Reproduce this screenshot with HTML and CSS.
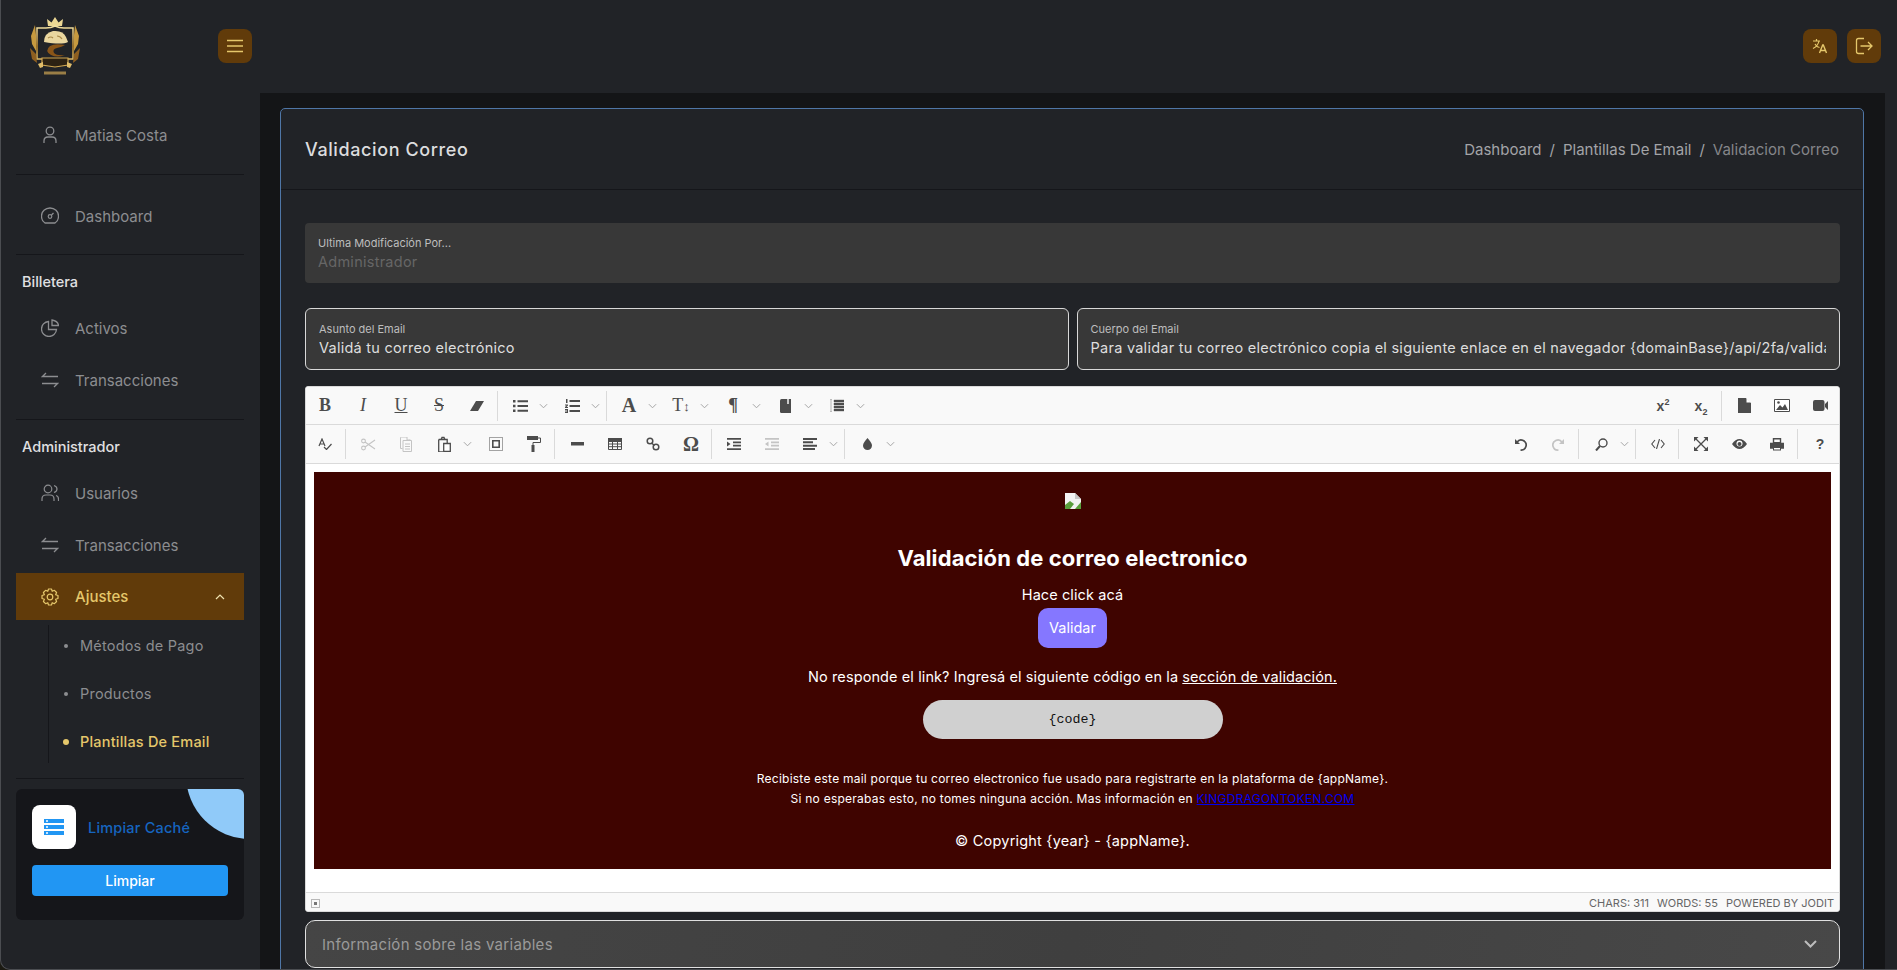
FILE: index.html
```html
<!DOCTYPE html>
<html lang="es">
<head>
  <meta charset="UTF-8">
  <meta name="viewport" content="width=device-width, initial-scale=1.0">
  <title>Validacion Correo</title>
  <link rel="stylesheet" href="styles.css">
</head>
<body>
  <svg class="defs" width="0" height="0">
    <symbol id="chev" viewBox="0 0 10 6"><path d="M1 1l4 4 4-4" fill="none" stroke="#a5a5a5" stroke-width="1.1"/></symbol>
    <symbol id="swap" viewBox="0 0 18 18"><path d="M5 2L1.5 5.5H17M13 16l3.500-3.500H1" fill="none" stroke="currentColor" stroke-width="1.300"/></symbol>
  </svg>

  <div class="app">
    <!-- barra lateral -->
    <aside class="sidebar">
      <div class="brand">
        <svg class="logo" width="50" height="60" viewBox="0 0 50 60">
          <defs>
            <linearGradient id="gold" x1="0" y1="0" x2="0" y2="1">
              <stop offset="0" stop-color="#f3e2a4"/>
              <stop offset="0.55" stop-color="#b9862c"/>
              <stop offset="1" stop-color="#e8c878"/>
            </linearGradient>
          </defs>
          <path d="M18 9l-1-7 4.500 3.500L25 0l3.500 5.500L33 2l-1 7z" fill="#ecd894"/>
          <path d="M7 11h9q5 0 9-2 4 2 9 2h9v31H31l-6 4-6-4H7z" fill="none" stroke="url(#gold)" stroke-width="1.500"/>
          <path d="M5 8l1 10v16l-4-7-1-8zM45 8l-1 10v16l4-7 1-8z" fill="#c79a3f"/>
          <path d="M0 31l6 6 1 9-5-4zM1 38l5 3M50 31l-6 6-1 9 5-4z" fill="#8f5f20"/>
          <path d="M14 25q0-9 9-11 10-1 13 6l2 5q-6 3-24 0z" fill="#e9d69f"/>
          <path d="M18 21q3-2 5 0M27 19q3 0 5 3" fill="none" stroke="#a98a4a" stroke-width="1.200"/>
          <path d="M35 28q-10-2-15 1-6 5 1 9 6 3 14 0-8 1-11-2-2-4 3-5 5-1 8-3z" fill="#8a5518"/>
          <path d="M12 41h26v7l-13 2-13-2z" fill="#2b2113" stroke="#cfa650" stroke-width="1.200"/>
          <path d="M8 47l5-2v5l-3 1zM42 47l-5-2v5l3 1z" fill="#e0bd6a"/>
          <path d="M14 54.500h22v3H14z" fill="#9a7e46"/>
        </svg>
        <button class="icon-btn">
          <svg width="16" height="14" viewBox="0 0 16 14"><path d="M0 1.500h16M0 7h16M0 12.500h16" stroke="currentColor" stroke-width="1.300"/></svg>
        </button>
      </div>

      <div class="nav-group first">
        <a class="nav-item">
          <svg class="nav-icon" viewBox="0 0 18 18"><circle cx="9" cy="5" r="3.800" fill="none" stroke="currentColor" stroke-width="1.300"/><path d="M3 17v-2q0-4 4-4h4q4 0 4 4v2" fill="none" stroke="currentColor" stroke-width="1.300"/></svg>
          Matias Costa
        </a>
      </div>
      <div class="nav-group second">
        <a class="nav-item">
          <svg class="nav-icon" viewBox="0 0 18 18"><path d="M4 16q-3.500-2-3.500-7a8.500 8 0 0 1 17 0q0 5-3.500 7z" fill="none" stroke="currentColor" stroke-width="1.300"/><circle cx="9" cy="9.500" r="1.800" fill="none" stroke="currentColor" stroke-width="1.200"/><path d="M10.500 8l2-2" stroke="currentColor" stroke-width="1.200"/></svg>
          Dashboard
        </a>
      </div>
      <div class="nav-group">
        <h4 class="nav-title">Billetera</h4>
        <a class="nav-item">
          <svg class="nav-icon" viewBox="0 0 18 18"><path d="M7.500 2.500a7.500 7.500 0 1 0 8 8H7.500z" fill="none" stroke="currentColor" stroke-width="1.300"/><path d="M11 1v5.500h6.500Q17 2 11 1z" fill="none" stroke="currentColor" stroke-width="1.300"/></svg>
          Activos
        </a>
        <a class="nav-item">
          <svg class="nav-icon"><use href="#swap"/></svg>
          Transacciones
        </a>
      </div>
      <div class="nav-group">
        <h4 class="nav-title">Administrador</h4>
        <a class="nav-item">
          <svg class="nav-icon" viewBox="0 0 18 18"><circle cx="7" cy="5" r="3.800" fill="none" stroke="currentColor" stroke-width="1.200"/><path d="M1 17v-2q0-4 4-4h4q4 0 4 4v2M13 1.500q3 1 3 3.500t-3 3.500M15 11.500q2.500.5 2.500 3.500v2" fill="none" stroke="currentColor" stroke-width="1.200"/></svg>
          Usuarios
        </a>
        <a class="nav-item">
          <svg class="nav-icon"><use href="#swap"/></svg>
          Transacciones
        </a>
        <a class="nav-item active">
          <svg class="nav-icon" viewBox="0 0 18 18"><path d="M7.500 1h3l.7 2.300 2.200-1 2.200 2.200-1 2.200L17 7.500v3l-2.400.8 1 2.200-2.200 2.200-2.200-1-.7 2.300h-3l-.7-2.300-2.200 1-2.200-2.200 1-2.200L1 10.500v-3l2.400-.8-1-2.200 2.200-2.200 2.200 1z" fill="none" stroke="currentColor" stroke-width="1.200" stroke-linejoin="round"/><circle cx="9" cy="9" r="2.800" fill="none" stroke="currentColor" stroke-width="1.200"/></svg>
          Ajustes
          <svg class="nav-caret" width="10" height="6" viewBox="0 0 10 6"><path d="M1 5l4-4 4 4" fill="none" stroke="#f0e3b0" stroke-width="1.200"/></svg>
        </a>
        <ul class="sub-nav">
          <li>Métodos de Pago</li>
          <li>Productos</li>
          <li class="current">Plantillas De Email</li>
        </ul>
      </div>

      <div class="cache-card">
        <div class="cache-head">
          <div class="cache-icon">
            <svg width="20" height="16" viewBox="0 0 20 16"><path d="M0 0h20v4H0zM0 6h20v4H0zM0 12h20v4H0z" fill="#2196f3"/><path d="M2 1.200h2v1.600H2zM2 7.200h2v1.600H2zM2 13.200h2v1.600H2z" fill="#fff"/></svg>
          </div>
          <span class="cache-title">Limpiar Caché</span>
        </div>
        <button class="cache-btn">Limpiar</button>
      </div>
    </aside>

    <div class="main">
      <header class="topbar">
        <button class="icon-btn">
          <svg width="16" height="16" viewBox="0 0 16 16"><path d="M1 3h7M4.500 1v2M7 3q-1 5-6 7.500M3 6q1.500 3 4.500 3.500" fill="none" stroke="currentColor" stroke-width="1.200"/><path d="M7.500 15l3.200-8h.6l3.200 8M8.700 12.500h4.600" fill="none" stroke="currentColor" stroke-width="1.400"/></svg>
        </button>
        <button class="icon-btn">
          <svg width="18" height="18" viewBox="0 0 18 18"><path d="M9 1.500H3.500q-2 0-2 2v11q0 2 2 2H9M5.500 9H17M13 5l4 4-4 4" fill="none" stroke="currentColor" stroke-width="1.300"/></svg>
        </button>
      </header>

      <div class="content">
        <section class="card">
          <div class="card-head">
            <h2 class="card-title">Validacion Correo</h2>
            <div class="crumbs">
              <span>Dashboard</span><i>/</i><span>Plantillas De Email</span><i>/</i><span class="last">Validacion Correo</span>
            </div>
          </div>

          <div class="card-body">
            <div class="field disabled">
              <label>Ultima Modificación Por...</label>
              <div class="value">Administrador</div>
            </div>

            <div class="field-row">
              <div class="field outlined">
                <label>Asunto del Email</label>
                <div class="value">Validá tu correo electrónico</div>
              </div>
              <div class="field outlined">
                <label>Cuerpo del Email</label>
                <div class="value">Para validar tu correo electrónico copia el siguiente enlace en el navegador {domainBase}/api/2fa/validate?token={token}</div>
              </div>
            </div>

            <div class="editor">
              <div class="tb-row">
                <span class="tb txt serif bold">B</span>
                <span class="tb txt serif italic">I</span>
                <span class="tb txt serif under">U</span>
                <span class="tb txt serif strike">S</span>
                <span class="tb"><svg width="16" height="12" viewBox="0 0 16 12"><path d="M5 11l-4 0 6-10h8l-6 10z" fill="#4c4c4c"/></svg></span>
                <i class="sep"></i>
                <span class="tb"><svg width="15" height="12" viewBox="0 0 15 12"><path d="M0 0h2.500v2.500H0zM0 4.700h2.500v2.500H0zM0 9.500h2.500V12H0zM4.500.3H15v2H4.500zM4.500 5H15v2H4.500zM4.500 9.800H15v2H4.500z" fill="#4c4c4c"/></svg></span><span class="arrow"><svg width="9" height="6"><use href="#chev"/></svg></span>
                <span class="tb"><svg width="15" height="14" viewBox="0 0 15 14"><path d="M1 0h1.500v4H1zM0 5.500h3v1L1.500 8H3v1H0V8l1.500-1.500H0zM0 10h3v4H0v-1h2v-.5H0v-1h2V11H0zM4.500 1H15v2H4.500zM4.500 6H15v2H4.500zM4.500 11H15v2H4.500z" fill="#4c4c4c"/></svg></span><span class="arrow"><svg width="9" height="6"><use href="#chev"/></svg></span>
                <i class="sep"></i>
                <span class="tb txt serif bold big">A</span><span class="arrow"><svg width="9" height="6"><use href="#chev"/></svg></span>
                <span class="tb txt serif"><span>T<small>↕</small></span></span><span class="arrow"><svg width="9" height="6"><use href="#chev"/></svg></span>
                <span class="tb txt serif bold">¶</span><span class="arrow"><svg width="9" height="6"><use href="#chev"/></svg></span>
                <span class="tb"><svg width="11" height="14" viewBox="0 0 11 14"><path d="M1.500 0H11v14H1.500Q0 14 0 12.500v-11Q0 0 1.500 0z" fill="#4c4c4c"/><path d="M7 0h2v5H7z" fill="#fff" opacity=".7"/></svg></span><span class="arrow"><svg width="9" height="6"><use href="#chev"/></svg></span>
                <span class="tb"><svg width="14" height="13" viewBox="0 0 14 13"><path d="M1 0v13M0 0h2M0 13h2M4 1h10v2H4zM4 4h10v2H4zM4 7h10v2H4zM4 10h10v2H4z" fill="#4c4c4c" stroke="#4c4c4c" stroke-width=".4"/></svg></span><span class="arrow"><svg width="9" height="6"><use href="#chev"/></svg></span>
                <span class="tb-gap"></span>
                <span class="tb txt sans bold"><span>x<sup>2</sup></span></span>
                <span class="tb txt sans bold"><span>x<sub>2</sub></span></span>
                <i class="sep"></i>
                <span class="tb"><svg width="13" height="15" viewBox="0 0 13 15"><path d="M0 0h8l5 5v10H0z" fill="#4c4c4c"/><path d="M8.500 0v4.500H13z" fill="#fff"/></svg></span>
                <span class="tb"><svg width="16" height="13" viewBox="0 0 16 13"><path d="M.5.500h15v12H.5z" fill="#fff" stroke="#4c4c4c"/><path d="M2 11l4-5 2.500 2.500L11 5l3 6z" fill="#4c4c4c"/><circle cx="4.500" cy="3.500" r="1.300" fill="#4c4c4c"/></svg></span>
                <span class="tb"><svg width="15" height="11" viewBox="0 0 15 11"><path d="M2 0h7.500q2 0 2 2v7q0 2-2 2H2q-2 0-2-2V2q0-2 2-2zM12 4l3-3v9l-3-3z" fill="#4c4c4c"/></svg></span>
              </div>

              <div class="tb-row second">
                <span class="tb"><svg width="14" height="12" viewBox="0 0 14 12"><path d="M1 8l3-7 3 7M2.200 6h3.600M6 9l2.500 2.500L13.500 6" fill="none" stroke="#4c4c4c" stroke-width="1.200"/></svg></span>
                <i class="sep"></i>
                <span class="tb off"><svg width="15" height="13" viewBox="0 0 15 13"><circle cx="2.500" cy="3" r="1.900" fill="none" stroke="currentColor" stroke-width="1.100"/><circle cx="2.500" cy="10" r="1.900" fill="none" stroke="currentColor" stroke-width="1.100"/><path d="M4 4l10 7M4 9L14 2" stroke="currentColor" stroke-width="1.100"/></svg></span>
                <span class="tb off"><svg width="12" height="15" viewBox="0 0 12 15"><path d="M0 0h7v3h3v-.5M.5.500v11h2M3 3.500h8.500v11H3z" fill="none" stroke="currentColor"/><path d="M5 7h5M5 9.500h5M5 12h5" stroke="currentColor"/></svg></span>
                <span class="tb"><svg width="13" height="16" viewBox="0 0 13 16"><path d="M.7 3.500h8.500V7M5 16H.7V3.500M3 3.500l1-2h2l1 2" fill="none" stroke="#4c4c4c" stroke-width="1.300"/><path d="M5.700 7.500h6.600v8H5.700z" fill="#fff" stroke="#4c4c4c" stroke-width="1.300"/></svg></span><span class="arrow"><svg width="9" height="6"><use href="#chev"/></svg></span>
                <span class="tb"><svg width="14" height="14" viewBox="0 0 14 14"><path d="M.5.500h13v13H.5z" fill="none" stroke="#4c4c4c" stroke-dasharray="1 1"/><path d="M3.800 3.800h6.400v6.400H3.800z" fill="none" stroke="#4c4c4c" stroke-width="1.600"/></svg></span>
                <span class="tb"><svg width="14" height="16" viewBox="0 0 14 16"><path d="M0 0h11v4H0z" fill="#4c4c4c"/><path d="M11 2h2.500v4.500H6V9" fill="none" stroke="#4c4c4c"/><path d="M4.500 9h3v7h-3z" fill="#4c4c4c"/></svg></span>
                <i class="sep"></i>
                <span class="tb"><svg width="13" height="4" viewBox="0 0 13 4"><path d="M0 0h13v3.500H0z" fill="#4c4c4c"/></svg></span>
                <span class="tb"><svg width="14" height="12" viewBox="0 0 14 12"><path d="M.5.500h13v11H.5zM.5 3.500h13M.5 6h13M.5 8.700h13M4.500 3.500v8M9.500 3.500v8" fill="none" stroke="#4c4c4c"/><path d="M0 0h14v3H0z" fill="#4c4c4c"/></svg></span>
                <span class="tb"><svg width="14" height="14" viewBox="0 0 14 14"><circle cx="4" cy="4" r="2.800" fill="none" stroke="#4c4c4c" stroke-width="1.500"/><circle cx="10" cy="10" r="2.800" fill="none" stroke="#4c4c4c" stroke-width="1.500"/><path d="M5.500 6l3 2.500" stroke="#4c4c4c" stroke-width="1.500"/></svg></span>
                <span class="tb txt serif bold big">Ω</span>
                <i class="sep"></i>
                <span class="tb"><svg width="14" height="12" viewBox="0 0 14 12"><path d="M0 0h14v1.800H0zM6 3.400h8v1.800H6zM6 6.800h8v1.800H6zM0 10.200h14V12H0zM0 3.500L3.500 6 0 8.500z" fill="#4c4c4c"/></svg></span>
                <span class="tb off"><svg width="14" height="12" viewBox="0 0 14 12"><path d="M0 0h14v1.800H0zM6 3.400h8v1.800H6zM6 6.800h8v1.800H6zM0 10.200h14V12H0zM3.500 3.500L0 6l3.500 2.500z" fill="currentColor"/></svg></span>
                <span class="tb"><svg width="14" height="12" viewBox="0 0 14 12"><path d="M0 0h14v2H0zM0 3.300h10v2H0zM0 6.700h14v2H0zM0 10h12v2H0z" fill="#4c4c4c"/></svg></span><span class="arrow"><svg width="9" height="6"><use href="#chev"/></svg></span>
                <i class="sep"></i>
                <span class="tb"><svg width="9" height="12" viewBox="0 0 9 12"><path d="M4.500 0Q9 5 9 7.500a4.500 4.500 0 0 1-9 0Q0 5 4.500 0z" fill="#4c4c4c"/></svg></span><span class="arrow"><svg width="9" height="6"><use href="#chev"/></svg></span>
                <span class="tb-gap"></span>
                <span class="tb"><svg width="13" height="13" viewBox="0 0 13 13"><path d="M3 4.200A5 5 0 1 1 6.500 12" fill="none" stroke="#4c4c4c" stroke-width="1.700"/><path d="M1 1v5h5z" fill="#4c4c4c"/></svg></span>
                <span class="tb off"><svg width="13" height="13" viewBox="0 0 13 13"><path d="M10 4.200A5 5 0 1 0 6.500 12" fill="none" stroke="currentColor" stroke-width="1.700"/><path d="M12 1v5H7z" fill="currentColor"/></svg></span>
                <i class="sep"></i>
                <span class="tb"><svg width="13" height="13" viewBox="0 0 13 13"><circle cx="8" cy="5" r="4" fill="none" stroke="#4c4c4c" stroke-width="1.400"/><path d="M5 8l-4 4.500" stroke="#4c4c4c" stroke-width="2"/></svg></span><span class="arrow"><svg width="9" height="6"><use href="#chev"/></svg></span>
                <i class="sep"></i>
                <span class="tb"><svg width="14" height="10" viewBox="0 0 14 10"><path d="M4 1L.8 5 4 9M10 1l3.200 4L10 9M8.500 0L5.500 10" fill="none" stroke="#4c4c4c" stroke-width="1.100"/></svg></span>
                <i class="sep"></i>
                <span class="tb"><svg width="14" height="14" viewBox="0 0 14 14"><path d="M2 2l10 10M12 2L2 12" stroke="#4c4c4c" stroke-width="1.300"/><path d="M0 0h4.500L0 4.500zM14 0v4.500L9.500 0zM0 14V9.500L4.500 14zM14 14H9.500L14 9.500z" fill="#4c4c4c"/></svg></span>
                <span class="tb"><svg width="15" height="10" viewBox="0 0 15 10"><path d="M0 5q3.500-5 7.500-5T15 5q-3.500 5-7.500 5T0 5z" fill="#4c4c4c"/><circle cx="7.500" cy="4.500" r="3" fill="#fff"/><circle cx="7.500" cy="5" r="2" fill="#4c4c4c"/></svg></span>
                <span class="tb"><svg width="14" height="13" viewBox="0 0 14 13"><path d="M3.500.8h7v4h-7zM.7 5.500h12.600v4.500H.7z" fill="none" stroke="#4c4c4c" stroke-width="1.400"/><path d="M0 6h14v4H0zM3 9h8v3.500H3z" fill="#4c4c4c"/><path d="M4 10h6v1.500H4z" fill="#fff"/></svg></span>
                <i class="sep"></i>
                <span class="tb txt sans bold">?</span>
              </div>

              <div class="workspace">
                <div class="mail">
                  <svg class="broken" width="16" height="16" viewBox="0 0 16 16"><path d="M0 0h10l6 6v10H0z" fill="#f3f3f3"/><path d="M10 0v6h6z" fill="#c7c7c7"/><path d="M0 16V12l5-4 4 3-4 5z" fill="#5a9e3c"/><path d="M16 9v7h-6z" fill="#5a9e3c"/></svg>
                  <h2 class="mail-title">Validación de correo electronico</h2>
                  <p class="mail-line first">Hace click acá</p>
                  <a class="mail-btn">Validar</a>
                  <p class="mail-line second">No responde el link? Ingresá el siguiente código en la <u>sección de validación.</u></p>
                  <div class="code-pill">{code}</div>
                  <p class="mail-small">Recibiste este mail porque tu correo electronico fue usado para registrarte en la plataforma de {appName}.<br>Si no esperabas esto, no tomes ninguna acción. Mas información en <a>KINGDRAGONTOKEN.COM</a></p>
                  <p class="mail-line copy">© Copyright {year} - {appName}.</p>
                </div>
              </div>

              <div class="status">
                <svg width="9" height="9" viewBox="0 0 9 9"><path d="M.5.500h8v8h-8z" fill="none" stroke="#777" stroke-dasharray="1 1"/><path d="M3 3h3v3H3z" fill="#777"/></svg>
                <span class="status-right">CHARS: 311</span>
                <span>WORDS: 55</span>
                <span>POWERED BY JODIT</span>
              </div>
            </div>

            <div class="accordion">
              <span>Información sobre las variables</span>
              <svg width="13" height="8" viewBox="0 0 13 8"><path d="M1 1l5.500 5.500L12 1" fill="none" stroke="#bdbdbd" stroke-width="2"/></svg>
            </div>
          </div>
        </section>
      </div>
    </div>
  </div>
</body>
</html>
```

FILE: styles.css
```css
* {
  box-sizing: border-box;
}

html, body {
  margin: 0;
  height: 970px;
  overflow: hidden;
  background: #1b1a12;
}

body {
  font-family: "Inter", "Noto Sans", sans-serif;
  font-size: 14px;
}

.defs {
  position: absolute;
}

.app {
  display: flex;
  height: 970px;
  background: #212327;
  border-left: 1px solid #4b4d51;
  border-bottom: 1px solid #4b4d51;
  border-bottom-left-radius: 10px;
  overflow: hidden;
}

/* barra lateral */
.sidebar {
  width: 259px;
  flex: none;
  padding: 0 16px 0 15px;
}

.brand {
  height: 109px;
  display: flex;
  align-items: flex-start;
  padding-top: 17px;
}
.logo {
  margin-left: 14px;
  flex: none;
}
.icon-btn {
  width: 34px;
  height: 34px;
  flex: none;
  padding: 0;
  border: 0;
  border-radius: 8px;
  background: #613b0a;
  color: #e5c76b;
  display: flex;
  align-items: center;
  justify-content: center;
}
.brand .icon-btn {
  margin: 12px 0 0 138px;
}

.nav-group {
  padding: 13px 0 13px;
  border-bottom: 1px solid #15161a;
}
.nav-group.first {
  padding-top: 0;
}
.nav-group.second {
  padding: 15px 0 12px;
}
.nav-title {
  margin: 0 0 6px;
  padding-left: 6px;
  height: 28px;
  line-height: 28px;
  font-size: 14.5px;
  font-weight: 500;
  color: #e0e0e2;
}
.nav-item {
  display: flex;
  align-items: center;
  height: 52px;
  padding-left: 25px;
  color: #8c8d90;
  font-size: 15px;
}
.nav-icon {
  width: 18px;
  height: 18px;
  margin-right: 16px;
  flex: none;
}
.nav-item.active {
  height: 47px;
  margin-top: 2px;
  background: #613b0a;
  color: #e5c76b;
  font-weight: 500;
}
.nav-caret {
  margin-left: auto;
  margin-right: 19px;
}
.sub-nav {
  list-style: none;
  margin: 5px 0 2px 32px;
  padding: 11px 0;
  height: 138px;
  border-left: 1px solid #15161a;
  display: flex;
  flex-direction: column;
  gap: 28px;
}
.sub-nav li {
  position: relative;
  padding-left: 31px;
  line-height: 20px;
  color: #8c8d90;
  font-size: 14.5px;
  letter-spacing: .2px;
}
.sub-nav li::before {
  content: "";
  position: absolute;
  left: 15px;
  top: 8px;
  width: 4px;
  height: 4px;
  border-radius: 50%;
  background: #8c8d90;
}
.sub-nav li.current {
  color: #e5c76b;
  font-weight: 500;
}
.sub-nav li.current::before {
  background: #e5c76b;
  left: 14px;
  top: 7px;
  width: 6px;
  height: 6px;
}

.cache-card {
  position: relative;
  margin-top: 10px;
  height: 131px;
  padding: 16px;
  background: #15161a;
  border-radius: 6px;
  overflow: hidden;
}
.cache-card::before {
  content: "";
  position: absolute;
  left: 170px;
  top: -78px;
  width: 128px;
  height: 128px;
  border-radius: 50%;
  background: #90caf9;
}
.cache-head {
  display: flex;
  align-items: center;
  gap: 12px;
}
.cache-icon {
  width: 44px;
  height: 44px;
  border-radius: 8px;
  background: #fff;
  display: flex;
  align-items: center;
  justify-content: center;
}
.cache-title {
  color: #1565c0;
  font-size: 14.5px;
  font-weight: 500;
  letter-spacing: .2px;
}
.cache-btn {
  display: block;
  width: 196px;
  height: 31px;
  margin-top: 16px;
  border: 0;
  border-radius: 4px;
  background: #2196f3;
  color: #fff;
  font-family: inherit;
  font-size: 14px;
  font-weight: 500;
}

/* contenido */
.main {
  flex: 1;
  min-width: 0;
  padding-right: 12px;
}
.topbar {
  height: 93px;
  display: flex;
  justify-content: flex-end;
  gap: 10px;
  padding: 29px 4px 0 0;
}
.content {
  height: 877px;
  padding: 15px 21px 0 20px;
  background: #141517;
}
.card {
  height: 900px;
  background: #212327;
  border: 1px solid #4f76a6;
  border-radius: 5px 5px 0 0;
}
.card-head {
  height: 81px;
  padding: 0 24px;
  display: flex;
  align-items: center;
  justify-content: space-between;
  border-bottom: 1px solid #15161a;
}
.card-title {
  margin: 0;
  font-size: 18px;
  font-weight: 500;
  letter-spacing: .6px;
  color: #dcdcde;
}
.crumbs {
  display: flex;
  color: #a3a4a7;
  font-size: 15px;
}
.crumbs i {
  font-style: normal;
  margin: 0 8px;
}
.crumbs .last {
  color: #85868a;
}

.card-body {
  padding: 33px 23px 0 24px;
}
.field {
  height: 60px;
  padding: 11px 13px 0 13px;
  background: #383838;
  border-radius: 4px;
  overflow: hidden;
}
.field label {
  display: block;
  font-size: 11px;
  line-height: 18px;
  color: #bdbdbd;
}
.field .value {
  font-size: 14.5px;
  line-height: 20px;
  letter-spacing: .26px;
  color: #dedede;
  white-space: nowrap;
  overflow: hidden;
}
.field.disabled .value {
  color: #666;
}
.field-row {
  display: grid;
  grid-template-columns: 1fr 1fr;
  gap: 8px;
  margin-top: 25px;
}
.field.outlined {
  height: 62px;
  padding-top: 11px;
  border: 1px solid #d8d8d8;
  border-radius: 6px;
}

/* editor jodit */
.editor {
  margin-top: 16px;
  height: 526px;
  background: #fff;
  border: 1px solid #dadada;
  border-radius: 3px;
  overflow: hidden;
  color: #1a1a1a;
}
.tb-row {
  height: 38px;
  display: flex;
  align-items: center;
  background: #f9f9f9;
  border-bottom: 1px solid #dadada;
}
.tb-row.second {
  height: 39px;
}
.tb {
  width: 38px;
  height: 36px;
  flex: none;
  display: flex;
  align-items: center;
  justify-content: center;
}
.tb.off {
  color: #c4c4c4;
}
.txt {
  color: #4c4c4c;
  font-size: 18px;
}
.serif {
  font-family: "Liberation Serif", serif;
}
.sans {
  font-family: "Liberation Sans", sans-serif;
  font-size: 14px;
}
.bold {
  font-weight: 700;
}
.italic {
  font-style: italic;
}
.under {
  text-decoration: underline;
}
.strike {
  text-decoration: line-through;
}
.big {
  font-size: 20px;
}
.txt small {
  font-size: 13px;
}
.txt sup, .txt sub {
  font-size: 9px;
  line-height: 0;
}
.arrow {
  width: 14px;
  flex: none;
  display: flex;
  align-items: center;
  justify-content: flex-start;
}
.sep {
  width: 1px;
  height: 30px;
  flex: none;
  margin: 0 3px 0 1px;
  background: #dadada;
}
.tb-gap {
  flex: 1;
}

.workspace {
  height: 428px;
  padding: 8px 8px 0 8px;
}
.mail {
  height: 397px;
  padding-top: 21px;
  background: #3f0400;
  color: #fff;
  text-align: center;
}
.broken {
  display: block;
  margin: 0 auto;
}
.mail-title {
  margin: 33px 0 0;
  font-size: 22px;
  line-height: 32px;
  letter-spacing: .1px;
  font-weight: 700;
}
.mail-line {
  margin: 0;
  font-size: 14.5px;
  line-height: 20px;
  letter-spacing: .1px;
}
.mail-line.first {
  margin-top: 11px;
}
.mail-btn {
  display: block;
  width: 69px;
  height: 40px;
  margin: 3px auto 0;
  border-radius: 10px;
  background: #8577ff;
  line-height: 40px;
  font-size: 14.5px;
}
.mail-line.second {
  margin-top: 19px;
}
.code-pill {
  width: 300px;
  height: 39px;
  margin: 13px auto 0;
  border-radius: 20px;
  background: #d0d0d0;
  color: #111;
  font-family: "Liberation Mono", monospace;
  font-size: 13.3px;
  line-height: 39px;
}
.mail-small {
  margin: 30px 0 0;
  font-size: 12px;
  line-height: 20px;
  letter-spacing: .24px;
}
.mail-small a {
  color: #0000ee;
  text-decoration: underline;
}
.mail-line.copy {
  margin-top: 22px;
  letter-spacing: .2px;
}

.status {
  height: 21px;
  padding: 0 5px;
  display: flex;
  align-items: center;
  gap: 8px;
  background: #f9f9f9;
  border-top: 1px solid #dadada;
  color: #666;
  font-size: 11px;
}
.status-right {
  margin-left: auto;
}

.accordion {
  height: 48px;
  margin-top: 8px;
  padding: 0 22px 0 16px;
  display: flex;
  align-items: center;
  justify-content: space-between;
  border: 1px solid #e0e0e0;
  border-radius: 10px;
  background: linear-gradient(100deg, #454545, #3f3f3f 50%, #484848);
  color: #9a9a9a;
  font-size: 15px;
  letter-spacing: .3px;
}
```
